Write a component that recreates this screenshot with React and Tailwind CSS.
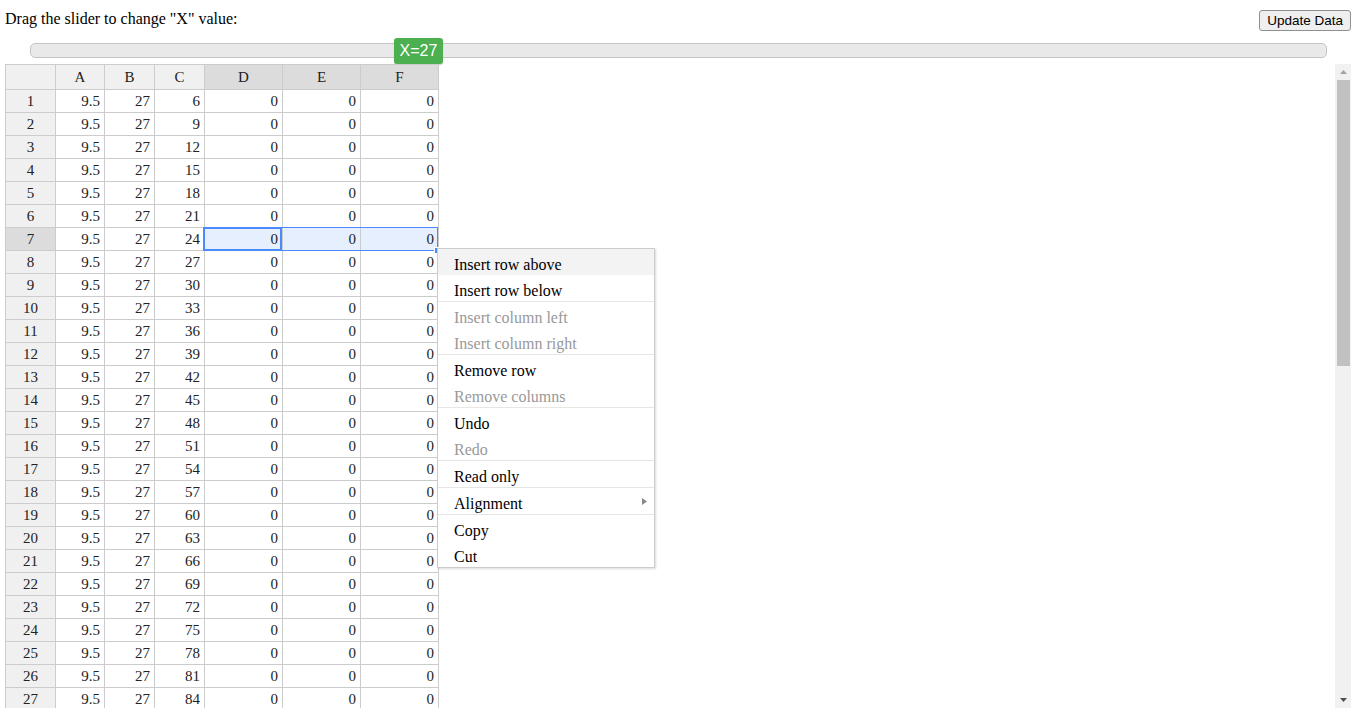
import React from "react";

const columns = [
  { key: "A", w: "w-[49px]", selected: false },
  { key: "B", w: "w-[50px]", selected: false },
  { key: "C", w: "w-[50px]", selected: false },
  { key: "D", w: "w-[78px]", selected: true },
  { key: "E", w: "w-[78px]", selected: true },
  { key: "F", w: "w-[78px]", selected: true },
];

const rows = Array.from({ length: 30 }, (_, i) => ({
  n: i + 1,
  values: [9.5, 27, 3 * (i + 1) + 3, 0, 0, 0],
}));

const menuItems = [
  { label: "Insert row above", hover: true },
  { label: "Insert row below" },
  { sep: true },
  { label: "Insert column left", disabled: true },
  { label: "Insert column right", disabled: true },
  { sep: true },
  { label: "Remove row" },
  { label: "Remove columns", disabled: true },
  { sep: true },
  { label: "Undo" },
  { label: "Redo", disabled: true },
  { sep: true },
  { label: "Read only" },
  { sep: true },
  { label: "Alignment", submenu: true },
  { sep: true },
  { label: "Copy" },
  { label: "Cut" },
];

const ContextMenu = () => (
  <div className="absolute left-[437px] top-[248px] w-[218px] bg-white border border-[#ccc] shadow-[1px_1px_2px_rgba(0,0,0,0.15)] font-['Liberation_Serif',serif] text-[16px]">
    {menuItems.map((item, idx) =>
      item.sep ? (
        <div key={idx} className="h-px bg-[#e6e6e6]" />
      ) : (
        <div
          key={idx}
          className={`relative h-[26px] pl-4 pt-[5px] leading-[22px] ${item.hover ? "bg-[#f3f3f3]" : ""} ${
            item.disabled ? "text-[#999]" : "text-black"
          }`}
        >
          {item.label}
          {item.submenu && (
            <svg className="absolute right-[7px] top-[10px]" width="5" height="7" viewBox="0 0 5 7">
              <path d="M0 0 L5 3.5 L0 7 Z" fill="#8a8a8a" />
            </svg>
          )}
        </div>
      )
    )}
  </div>
);

const Scrollbar = () => (
  <div className="w-[16px] h-[644px] bg-[#f1f1f1] flex flex-col items-center">
    <div className="h-[16px] flex items-center justify-center">
      <svg width="7" height="4" viewBox="0 0 7 4">
        <path d="M0 4 L3.5 0 L7 4 Z" fill="#a3a3a3" />
      </svg>
    </div>
    <div className="w-[13px] h-[286px] bg-[#c1c1c1]" />
    <div className="flex-1" />
    <div className="h-[16px] flex items-center justify-center">
      <svg width="7" height="4" viewBox="0 0 7 4">
        <path d="M0 0 L3.5 4 L7 0 Z" fill="#505050" />
      </svg>
    </div>
  </div>
);

const Grid = () => (
  <div className="relative flex-1 h-[644px] overflow-hidden font-['Liberation_Serif',serif] text-[15px] text-[#222]">
    <div className="w-fit border-l border-t border-[#ccc]">
      <div className="flex h-[25px] border-b border-[#ccc]">
        <div className="w-[50px] shrink-0 border-r border-[#ccc] bg-[#f0f0f0]" />
        {columns.map((c) => (
          <div
            key={c.key}
            className={`${c.w} shrink-0 border-r border-[#ccc] text-center leading-[24px] ${
              c.selected ? "bg-[#dcdcdc]" : "bg-[#f0f0f0]"
            }`}
          >
            {c.key}
          </div>
        ))}
      </div>
      {rows.map((r) => {
        const active = r.n === 7;
        return (
          <div key={r.n} className="flex h-[23px] border-b border-[#ccc]">
            <div
              className={`w-[50px] shrink-0 border-r border-[#ccc] text-center leading-[22px] ${
                active ? "bg-[#dcdcdc]" : "bg-[#f0f0f0]"
              }`}
            >
              {r.n}
            </div>
            {r.values.map((v, ci) => (
              <div
                key={ci}
                className={`${columns[ci].w} shrink-0 border-r border-[#ccc] pr-1 text-right leading-[22px] ${
                  active && ci >= 3 ? "bg-[#e6effd]" : "bg-white"
                }`}
              >
                {v}
              </div>
            ))}
          </div>
        );
      })}
    </div>
    {/* selection overlay */}
    <div className="absolute left-[198px] top-[163px] w-[235px] h-[24px] border border-[#4b89ff]" />
    <div className="absolute left-[198px] top-[163px] w-[79px] h-[24px] border-2 border-[#4b89ff]" />
    <div className="absolute left-[429px] top-[183px] w-[7px] h-[7px] bg-[#4b89ff] border border-white" />
  </div>
);

export default function App() {
  return (
    <div className="relative w-[1363px] h-[717px] bg-white overflow-hidden">
      <div className="flex h-[38px] w-[1351px] items-start justify-between pl-[5px]">
        <p className="pt-[10px] leading-[18px] text-[16px] text-black font-['Liberation_Serif',serif]">
          Drag the slider to change "X" value:
        </p>
        <button className="mt-[10px] h-[21px] px-[7px] rounded-[3px] border border-[#8f8f8f] bg-[#efefef] text-[13.5px] leading-[19px] text-black font-['Liberation_Sans',sans-serif]">
          Update Data
        </button>
      </div>
      <div className="relative h-[26px] pt-[5px]">
        <div className="ml-[30px] w-[1297px] h-[15px] rounded-[5px] border border-[#c5c5c5] bg-[#e9e9e9]" />
        <div className="absolute left-[394px] top-0 w-[49px] h-[26px] rounded-[3px] bg-[#4caf50] text-white text-[16px] leading-[26px] text-center font-['Liberation_Sans',sans-serif] shadow-[0_1px_1px_rgba(0,0,0,0.2)]">
          X=27
        </div>
      </div>
      <div className="flex w-[1351px] pl-[5px]">
        <Grid />
        <Scrollbar />
      </div>
      <ContextMenu />
    </div>
  );
}
